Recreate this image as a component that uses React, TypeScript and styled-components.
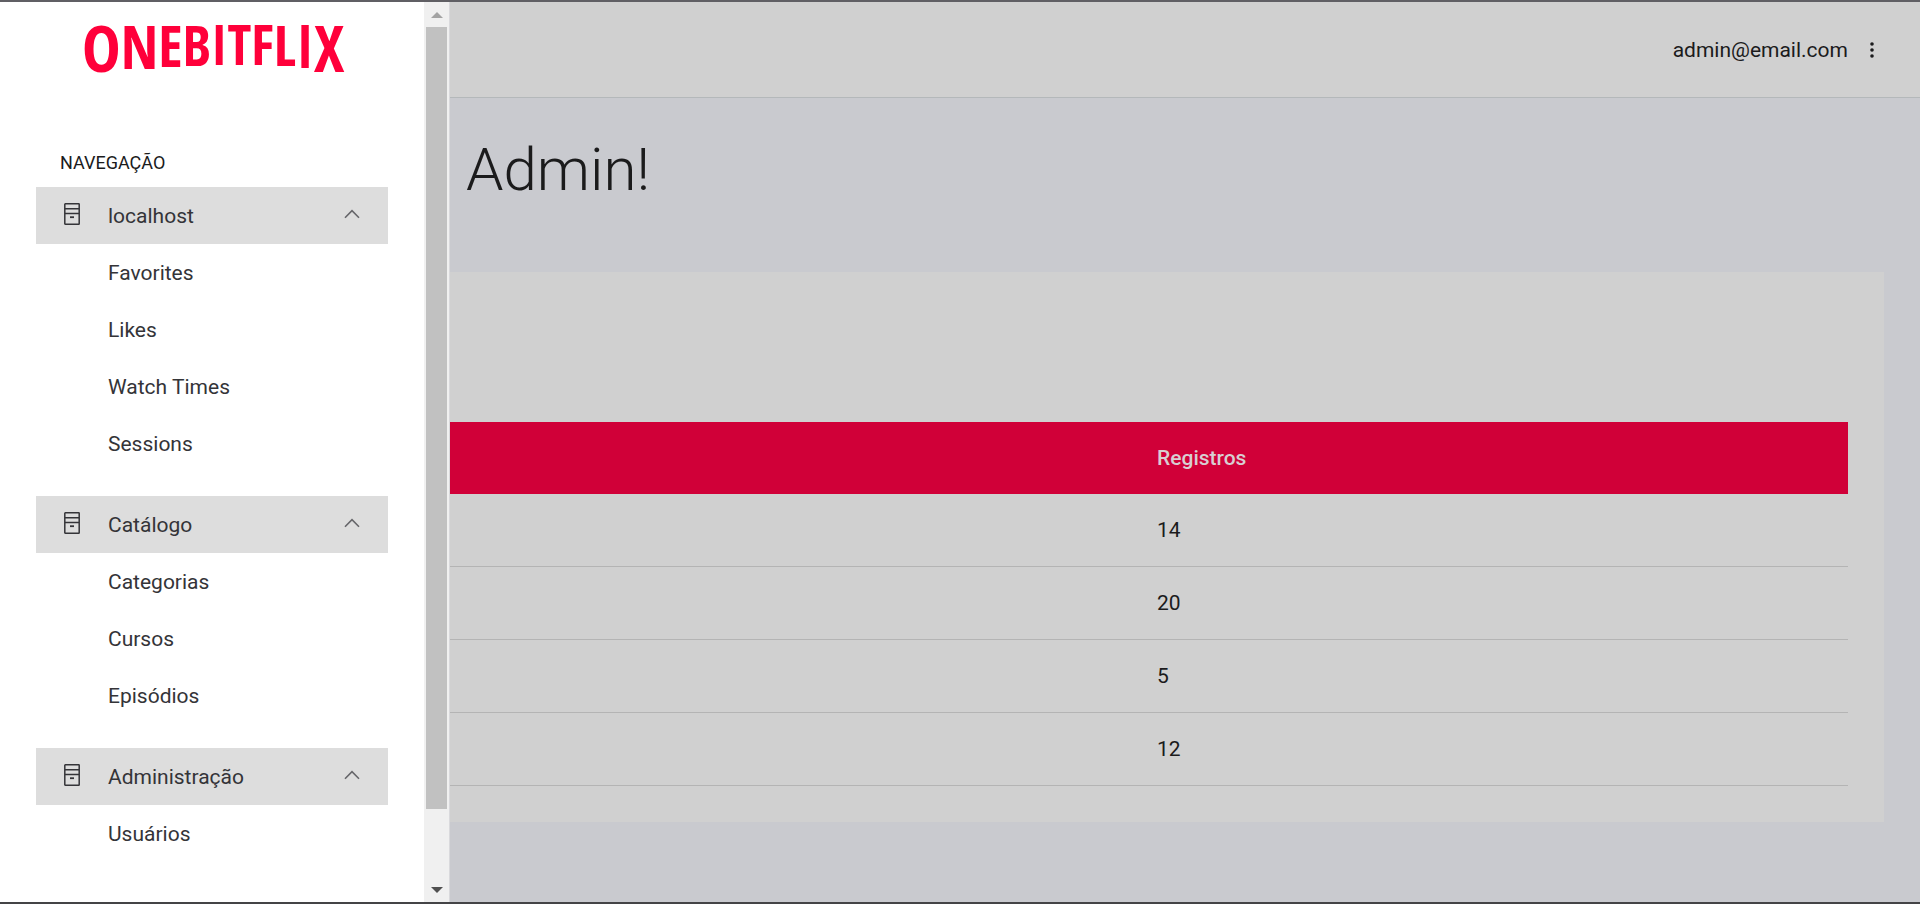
import React from "react";
import styled, { createGlobalStyle } from "styled-components";

const GlobalStyle = createGlobalStyle`
  *, *::before, *::after { box-sizing: border-box; }
  body {
    margin: 0;
    font-family: Roboto, "Liberation Sans", sans-serif;
    font-size: 21px;
    line-height: 26px;
    color: #1b1b1c;
  }
`;

const Page = styled.div`
  display: flex;
  min-height: 100vh;
  border-top: 2px solid #605f64;
  border-bottom: 2px solid #444446;
  background: #c9cacf;
`;

const Drawer = styled.aside`
  display: flex;
  flex: 0 0 450px;
  background: #fff;
  border-right: 1px solid #d9d9dc;
`;

const DrawerBody = styled.div`
  flex: 1;
  padding: 0 36px;
`;

const LogoLink = styled.a`
  display: flex;
  justify-content: center;
  height: 100px;
  margin-bottom: 46px;

  svg { display: block; flex: none; overflow: visible; }
`;

const NavTitle = styled.h2`
  margin: 0;
  padding: 0 24px;
  height: 39px;
  font-size: 18px;
  line-height: 30px;
  font-weight: 400;
`;

const NavGroup = styled.section`
  margin-bottom: 24px;
`;

const GroupButton = styled.button`
  display: flex;
  align-items: center;
  width: 100%;
  height: 57px;
  padding: 0 28px;
  border: 0;
  background: #ddd;
  color: #343438;
  font: inherit;
  text-align: left;
  cursor: pointer;

  svg { flex: none; margin-bottom: 4px; }
`;

const GroupName = styled.span`
  flex: 1;
  padding: 1px 0 0 28px;
`;

const NavList = styled.ul`
  margin: 0;
  padding: 0;
  list-style: none;
`;

const NavLink = styled.a`
  display: flex;
  align-items: center;
  height: 57px;
  padding: 1px 0 0 72px;
  color: #343438;
  text-decoration: none;
`;

const ScrollTrack = styled.div`
  display: flex;
  flex-direction: column;
  align-items: center;
  width: 25px;
  background: #f0f0f0;
`;

const ScrollArrow = styled.span<{ $down?: boolean }>`
  display: flex;
  align-items: center;
  justify-content: center;
  height: 25px;

  &::before {
    content: "";
    border: 6px solid transparent;
    border-width: ${p => (p.$down ? "6px 6px 0" : "0 6px 6px")};
    border-top-color: ${p => (p.$down ? "#505050" : "transparent")};
    border-bottom-color: ${p => (p.$down ? "transparent" : "#a3a3a3")};
  }
`;

const ScrollRail = styled.div`
  flex: 1;
  width: 21px;
`;

const ScrollThumb = styled.div`
  height: 92%;
  background: #c1c1c1;
`;

const Main = styled.main`
  flex: 1;
  min-width: 0;
`;

const TopBar = styled.header`
  display: flex;
  align-items: center;
  justify-content: flex-end;
  gap: 12px;
  height: 96px;
  padding-right: 36px;
  background: #d0d0d0;
  border-bottom: 1px solid #b4b8ba;
`;

const MenuButton = styled.button`
  display: flex;
  align-items: center;
  justify-content: center;
  width: 24px;
  height: 24px;
  padding: 0;
  border: 0;
  background: none;
  color: inherit;
  cursor: pointer;
`;

const Title = styled.h1`
  margin: 0;
  padding: 34px 16px 64px;
  font-size: 60px;
  line-height: 76px;
  font-weight: 300;
`;

const Card = styled.section`
  margin-right: 36px;
  padding: 150px 36px 36px 0;
  background: #d0d0d0;
`;

const Table = styled.table`
  width: 100%;
  border-collapse: separate;
  border-spacing: 0;
  table-layout: fixed;
`;

const HeadCell = styled.th`
  height: 72px;
  padding: 0 22px;
  background: #d00038;
  color: #d8ced2;
  font-weight: 500;
  text-align: left;

  &:first-child { width: 49%; }
`;

const Cell = styled.td`
  height: 73px;
  padding: 0 22px;
  border-bottom: 1px solid #b4b4b4;
`;

/* Letters hang from one top line and grow towards both ends, which bends the baseline into an arch. */
const logoLetters = [
  { char: "O", size: 65 },
  { char: "N", size: 60 },
  { char: "E", size: 57 },
  { char: "B", size: 56 },
  { char: "I", size: 55 },
  { char: "T", size: 55 },
  { char: "F", size: 55 },
  { char: "L", size: 56 },
  { char: "I", size: 59 },
  { char: "X", size: 64 },
];

const Logo = () => (
  <svg width="260" height="100" viewBox="0 0 260 100" role="img" aria-label="OneBitFlix">
    <text x="0" fill="#ff003a" fontFamily='"Open Sans Condensed", "Roboto Condensed", sans-serif' fontWeight="700">
      {logoLetters.map(({ char, size }, i) => (
        <tspan key={i} y={24 + Math.round(size * 0.714)} fontSize={size}>{char}</tspan>
      ))}
    </text>
  </svg>
);

const ArchiveIcon = () => (
  <svg width="16" height="22" viewBox="0 0 16 22" fill="none" stroke="currentColor" strokeWidth="1.5" aria-hidden="true">
    <rect x="0.8" y="0.8" width="14.4" height="20.4" rx="0.5" />
    <path d="M1 5.7h14M1 10.4h14" />
    <path d="M6 14.2h4" strokeWidth="1.8" />
  </svg>
);

const ChevronUp = () => (
  <svg width="16" height="10" viewBox="0 0 16 10" fill="none" stroke="#66666a" strokeWidth="1.6" aria-hidden="true">
    <path d="M1 8.7L8 1.7l7 7" />
  </svg>
);

const MoreIcon = () => (
  <svg width="6" height="18" viewBox="0 0 6 18" fill="currentColor" aria-hidden="true">
    <circle cx="3" cy="3" r="1.8" />
    <circle cx="3" cy="9" r="1.8" />
    <circle cx="3" cy="15" r="1.8" />
  </svg>
);

const groups = [
  { name: "localhost", items: ["Favorites", "Likes", "Watch Times", "Sessions"] },
  { name: "Catálogo", items: ["Categorias", "Cursos", "Episódios"] },
  { name: "Administração", items: ["Usuários"] },
];

const records = [14, 20, 5, 12];

export default function App() {
  return (
    <>
      <GlobalStyle />
      <Page>
        <Drawer>
          <DrawerBody>
            <LogoLink href="#"><Logo /></LogoLink>
            <nav>
              <NavTitle>NAVEGAÇÃO</NavTitle>
              {groups.map(group => (
                <NavGroup key={group.name}>
                  <GroupButton type="button" aria-expanded="true">
                    <ArchiveIcon />
                    <GroupName>{group.name}</GroupName>
                    <ChevronUp />
                  </GroupButton>
                  <NavList>
                    {group.items.map(item => (
                      <li key={item}><NavLink href="#">{item}</NavLink></li>
                    ))}
                  </NavList>
                </NavGroup>
              ))}
            </nav>
          </DrawerBody>
          <ScrollTrack aria-hidden="true">
            <ScrollArrow />
            <ScrollRail><ScrollThumb /></ScrollRail>
            <ScrollArrow $down />
          </ScrollTrack>
        </Drawer>
        <Main>
          <TopBar>
            <span>admin@email.com</span>
            <MenuButton type="button" aria-label="Menu"><MoreIcon /></MenuButton>
          </TopBar>
          <Title>Admin!</Title>
          <Card>
            <Table>
              <thead>
                <tr>
                  <HeadCell />
                  <HeadCell scope="col">Registros</HeadCell>
                </tr>
              </thead>
              <tbody>
                {records.map(count => (
                  <tr key={count}>
                    <Cell />
                    <Cell>{count}</Cell>
                  </tr>
                ))}
              </tbody>
            </Table>
          </Card>
        </Main>
      </Page>
    </>
  );
}
